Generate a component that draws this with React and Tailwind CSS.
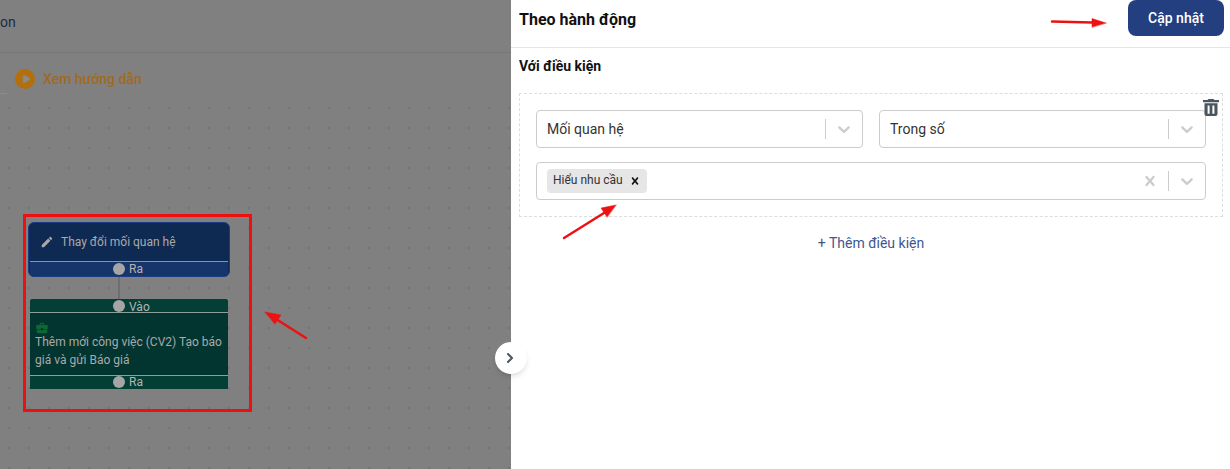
import { Play, ChevronRight } from 'lucide-react'

const CHEVRON = 'M4.516 7.548c0.436-0.446 1.043-0.481 1.576 0l3.908 3.747 3.908-3.747c0.533-0.481 1.141-0.446 1.574 0 0.436 0.445 0.408 1.197 0 1.615-0.406 0.418-4.695 4.502-4.695 4.502-0.217 0.223-0.502 0.335-0.787 0.335s-0.57-0.112-0.789-0.335c0 0-4.287-4.084-4.695-4.502s-0.436-1.17 0-1.615z'
const CROSS = 'M14.348 14.849c-0.469 0.469-1.229 0.469-1.697 0l-2.651-3.03-2.651 3.029c-0.469 0.469-1.229 0.469-1.697 0-0.469-0.469-0.469-1.229 0-1.697l2.758-3.15-2.759-3.152c-0.469-0.469-0.469-1.228 0-1.697s1.228-0.469 1.697 0l2.652 3.031 2.651-3.031c0.469-0.469 1.228-0.469 1.697 0s0.469 1.229 0 1.697l-2.758 3.152 2.758 3.15c0.469 0.469 0.469 1.229 0 1.698z'

function SelectIcon({ d, className }) {
  return (
    <svg viewBox="0 0 20 20" className={`w-5 h-5 fill-[#cccccc] ${className || ''}`}>
      <path d={d} />
    </svg>
  )
}

function SelectBox({ label }) {
  return (
    <div className="flex-1 h-[38px] flex items-center rounded border border-[#cccccc] bg-white pl-[10px] pr-2">
      <span className="flex-1 text-sm text-[#333333]">{label}</span>
      <span className="w-px h-5 bg-[#cccccc] mr-2" />
      <SelectIcon d={CHEVRON} />
    </div>
  )
}

// port sits with its circle at a fixed x inside the node
function Port({ label, className }) {
  return (
    <div className={`flex items-center gap-[4px] text-xs leading-none text-[#b4b4b4] ${className}`}>
      <span className="w-3 h-3 rounded-full bg-[#a5a5a5]" />
      <span>{label}</span>
    </div>
  )
}

// dimmed flow canvas behind the drawer
function FlowCanvas() {
  return (
    <div className="w-[511px] h-full shrink-0 flex flex-col bg-[#808080]">
      <div className="h-[53px] shrink-0 border-b border-[#767676] pt-[14px] text-sm leading-4 text-[#1c2a47]">on</div>
      <div className="h-[41px] shrink-0 flex items-center gap-2 pl-[15px] pt-[11px]">
        <span className="w-5 h-5 rounded-full bg-[#b26f0c] flex items-center justify-center">
          <Play size={10} className="fill-[#8a8a8a] text-[#8a8a8a] ml-px" />
        </span>
        <span className="text-sm font-medium text-[#a3691f]">Xem hướng dẫn</span>
      </div>
      <div className="flex-1 relative bg-[radial-gradient(circle,#747474_1px,transparent_1.2px)] bg-[length:20px_20px] bg-[position:-1px_4px]">
        <div className="absolute left-0 -top-px w-[7px] h-px bg-[#8c8c8c]" />
        {/* selection box + nodes */}
        <div className="absolute left-[23px] top-[120px] w-[229px] h-[198px] border-[3px] border-[#ee0f0f] px-[2px] pt-[5px]">
          <div className="w-[202px] h-[55px] flex flex-col rounded-md border border-[#1c3b84] bg-[#0f2a52] overflow-hidden">
            <div className="h-[38px] flex items-center gap-[7px] pl-[11px] text-xs text-[#a9a9a9]">
              <svg viewBox="0 0 24 24" className="w-3.5 h-3.5 fill-[#a9a9a9]">
                <path d="M3 17.25V21h3.75L17.81 9.94l-3.75-3.75L3 17.25zM20.71 7.04c.39-.39.39-1.02 0-1.41l-2.34-2.34c-.39-.39-1.02-.39-1.41 0l-1.83 1.83 3.75 3.75 1.83-1.83z" />
              </svg>
              <span>Thay đổi mối quan hệ</span>
            </div>
            <div className="flex-1 border-t border-[#8a94a5] bg-[#15356b] mx-px flex items-center">
              <Port label="Ra" className="ml-[83px] -mt-px" />
            </div>
          </div>
          <div className="w-[2px] h-[22px] bg-[#6f6f6f] ml-[90px]" />
          <div className="w-[198px] h-[90px] ml-[2px] flex flex-col rounded-t-[3px] bg-[#033530]">
            <div className="h-[13px] flex items-center bg-[#043f36] rounded-t-[3px]">
              <Port label="Vào" className="ml-[83px] [&>span:last-child]:mt-[3px]" />
            </div>
            <div className="h-[64px] border-y border-[#8f9f9c] px-[5px] pt-2">
              <svg viewBox="0 0 24 24" className="w-[14px] h-[14px] fill-[#0b6a33]">
                <path d="M10 16v-1H3.01L3 19c0 1.11.89 2 2 2h14c1.11 0 2-.89 2-2v-4h-7v1h-4zm10-9h-4.01V5l-2-2h-4l-2 2v2H4c-1.1 0-2 .9-2 2v3c0 1.11.89 2 2 2h6v-2h4v2h6c1.1 0 2-.9 2-2V9c0-1.1-.9-2-2-2zm-6 0h-4V5h4v2z" />
              </svg>
              <p className="text-xs leading-[18px] text-[#a9a9a9] -mt-[2px]">Thêm mới công việc (CV2) Tạo báo giá và gửi Báo giá</p>
            </div>
            <div className="flex-1 bg-[#043f36] flex items-center">
              <Port label="Ra" className="ml-[83px] -mt-px" />
            </div>
          </div>
        </div>
      </div>
    </div>
  )
}

function Drawer() {
  return (
    <div className="flex-1 h-full flex flex-col bg-white">
      <div className="h-[48px] shrink-0 flex justify-between border-b border-[#e5e5e5] pl-2 pr-[7px]">
        <h1 className="text-base leading-[39px] font-bold text-[#111111]">Theo hành động</h1>
        <button className="w-[96px] h-9 rounded-lg bg-[#243f80] text-sm font-medium text-white">Cập nhật</button>
      </div>
      <div className="px-2 pt-[10px]">
        <h2 className="text-sm leading-4 font-bold text-[#111111]">Với điều kiện</h2>
        <div className="relative mt-[19px] w-[704px] h-[124px] border border-dashed border-[#dddddd] px-4 pt-4 flex flex-col gap-[14px]">
          <svg viewBox="0 0 16 17" className="absolute right-[3px] top-[5px] w-4 h-[17px] fill-[#4a5560]">
            <path fillRule="evenodd" d="M5.5 0h5l1 1H16v2.2H0V1h4.5l1-1zM1.5 4.3h13V15c0 1.1-.9 2-2 2h-9c-1.1 0-2-.9-2-2V4.3zM4.6 6.5v8.2h2V6.5h-2zm4.8 0v8.2h2V6.5h-2z" />
          </svg>
          <div className="flex gap-4">
            <SelectBox label="Mối quan hệ" />
            <SelectBox label="Trong số" />
          </div>
          <div className="h-[38px] flex items-center rounded border border-[#cccccc] bg-white pl-[10px] pr-2">
            <div className="w-[100px] h-6 flex items-center justify-between rounded-sm bg-[#e6e6e6] pl-[6px] pr-[5px]">
              <span className="text-xs leading-none text-[#333333] -mt-[2px]">Hiểu nhu cầu</span>
              <svg viewBox="0 0 20 20" className="w-[14px] h-[14px] fill-[#111111]"><path d={CROSS} /></svg>
            </div>
            <span className="flex-1" />
            <SelectIcon d={CROSS} className="mr-2" />
            <span className="w-px h-5 bg-[#cccccc] mr-2" />
            <SelectIcon d={CHEVRON} />
          </div>
        </div>
        <p className="w-[704px] mt-[18px] text-center text-sm leading-4 text-[#3f568f]">+ Thêm điều kiện</p>
      </div>
    </div>
  )
}

export default function App() {
  return (
    <div className="relative w-[1230px] h-[469px] flex overflow-hidden font-['Roboto',sans-serif]">
      <FlowCanvas />
      <Drawer />

      {/* collapse handle */}
      <button className="absolute left-[495px] top-[342px] w-8 h-8 rounded-full bg-white shadow-md flex items-center justify-center pr-0.5">
        <ChevronRight size={16} strokeWidth={3} className="text-[#4a5560]" />
      </button>

      {/* red annotation arrows */}
      <svg className="absolute inset-0 w-full h-full pointer-events-none" viewBox="0 0 1230 469">
        <g fill="#ee1111" stroke="#ee1111" strokeLinecap="round">
          <line x1="306" y1="338" x2="276" y2="319" strokeWidth="2.5" />
          <polygon points="265,312 281,315 275,324" strokeWidth="0.5" />
          <line x1="1052" y1="21.5" x2="1092" y2="22.5" strokeWidth="2.5" />
          <polygon points="1106,23 1092,18.5 1092,27" strokeWidth="0.5" />
          <line x1="564" y1="238" x2="604" y2="213" strokeWidth="2.5" />
          <polygon points="616,205 601,208 607,217" strokeWidth="0.5" />
        </g>
      </svg>
    </div>
  )
}
